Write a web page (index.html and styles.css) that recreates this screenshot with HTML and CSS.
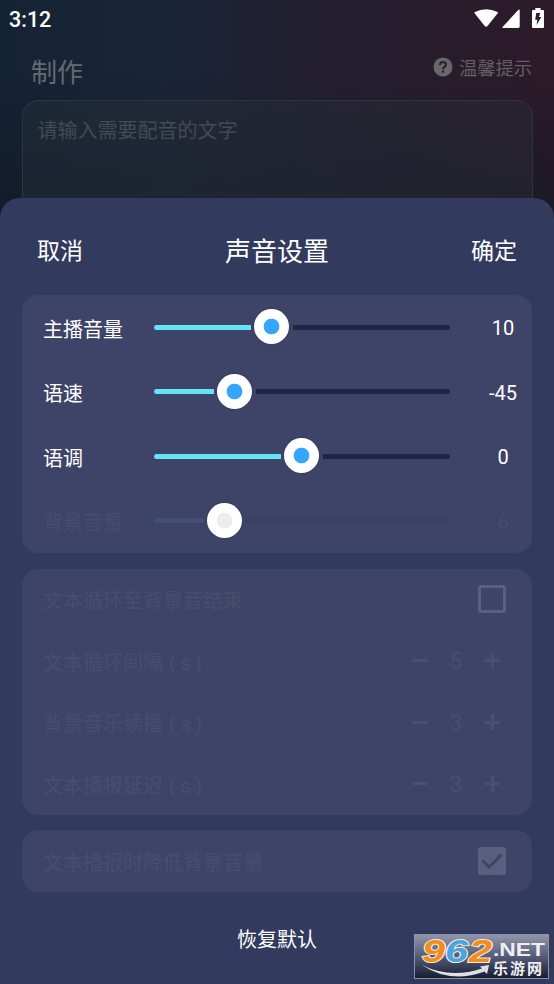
FILE: index.html
```html
<!DOCTYPE html>
<html lang="zh-CN">
<head>
<meta charset="utf-8">
<title>声音设置</title>
<link rel="stylesheet" href="styles.css">
</head>
<body>
<div class="screen">
  <div class="backdrop">
    <div class="status">
      <span class="clock">3:12</span>
      <svg class="status-icons" width="72" height="22" viewBox="0 0 72 22">
        <path fill="#fff" d="M.8 4.900Q12.300-.5 23.500 4.900Q24.200 5.500 23.500 6.500L13.500 19Q12.100 20.500 10.700 19L.8 6.500Q.1 5.500.8 4.900Z"/>
        <path fill="#fff" d="M45.700 3.500V19.600Q45.700 21 44.400 21H29.600Q27.500 21 29 19.400L44 3.300Q45.700 1.700 45.700 3.500Z"/>
        <path fill="#fff" d="M61.300 1H66.600V3H69Q70 3 70 4V20Q70 21 69 21H59Q58 21 58 20V4Q58 3 59 3H61.300Z"/>
        <path fill="#2c1b29" d="M62.300 6.100H66.200L65 10H67.300L62.600 18.100L63.300 12.700H61.200Z"/>
      </svg>
    </div>
    <div class="page-head">
      <h1 class="page-title">制作</h1>
      <div class="tips">
        <svg width="20" height="20" viewBox="0 0 20 20">
          <circle cx="10" cy="10" r="9.500" fill="#6a676b"/>
          <path d="M7 8Q7 4.900 10 4.900T13 7.700C13 9.600 10 9.800 10 12.300" fill="none" stroke="#241d2c" stroke-width="2"/>
          <rect x="9" y="13.600" width="2" height="2" fill="#241d2c"/>
        </svg>
        <span>温馨提示</span>
      </div>
    </div>
    <div class="editor">请输入需要配音的文字</div>
  </div>

  <div class="sheet">
    <div class="sheet-head">
      <span class="action">取消</span>
      <h2 class="sheet-title">声音设置</h2>
      <span class="action">确定</span>
    </div>

    <div class="card sliders">
      <div class="slider-row">
        <span class="label">主播音量</span>
        <div class="slider"><i class="fill" style="width:97px"></i><i class="thumb"></i><i class="rest"></i></div>
        <span class="value">10</span>
      </div>
      <div class="slider-row">
        <span class="label">语速</span>
        <div class="slider"><i class="fill" style="width:60px"></i><i class="thumb"></i><i class="rest"></i></div>
        <span class="value">-45</span>
      </div>
      <div class="slider-row">
        <span class="label">语调</span>
        <div class="slider"><i class="fill" style="width:127px"></i><i class="thumb"></i><i class="rest"></i></div>
        <span class="value">0</span>
      </div>
      <div class="slider-row off">
        <span class="label">背景音量</span>
        <div class="slider"><i class="fill" style="width:50px"></i><i class="thumb"></i><i class="rest"></i></div>
        <span class="value">6</span>
      </div>
    </div>

    <div class="card options">
      <div class="option-row"><span>文本循环至背景音结束</span><i class="checkbox"></i></div>
      <div class="option-row"><span>文本循环间隔<span class="unit">( s )</span></span>
        <div class="stepper"><i class="minus"></i><span class="count">5</span><i class="plus"></i></div></div>
      <div class="option-row"><span>背景音乐续播<span class="unit">( s )</span></span>
        <div class="stepper"><i class="minus"></i><span class="count">3</span><i class="plus"></i></div></div>
      <div class="option-row"><span>文本播报延迟<span class="unit">( s )</span></span>
        <div class="stepper"><i class="minus"></i><span class="count">3</span><i class="plus"></i></div></div>
    </div>

    <div class="card options">
      <div class="option-row"><span>文本播报时降低背景音量</span>
        <svg class="checked" width="28" height="28" viewBox="0 0 28 28">
          <rect width="28" height="28" rx="2.500" fill="#5a5f7d"/>
          <path d="M4.500 13.500L11.200 20L23.500 7.500" fill="none" stroke="#3d4468" stroke-width="3"/>
        </svg>
      </div>
    </div>

    <div class="reset">恢复默认</div>
  </div>

  <svg class="watermark" width="135" height="45" viewBox="0 0 135 45">
    <defs>
      <linearGradient id="plate" x1="0" y1="0" x2="0" y2="1">
        <stop offset="0" stop-color="#9397ab"/>
        <stop offset=".5" stop-color="#555c78"/>
        <stop offset="1" stop-color="#171b30"/>
      </linearGradient>
    </defs>
    <rect x=".5" y=".5" width="134" height="44" fill="url(#plate)" stroke="#8c91a8"/>
    <g class="mark-number">
      <text x="8" y="27.500" textLength="23" lengthAdjust="spacingAndGlyphs" fill="#f28c1c">9</text>
      <text x="31" y="27.500" textLength="23" lengthAdjust="spacingAndGlyphs" fill="#4aa5df">6</text>
      <text x="55" y="27.500" textLength="23" lengthAdjust="spacingAndGlyphs" fill="#f28c1c">2</text>
    </g>
    <path d="M8 31Q36 45 68 34.500L66 32.500L75 31L73 40L70.500 37.500Q36 50 8 31Z" fill="#dfe1e8"/>
    <text class="mark-net" x="79" y="21.500" textLength="52" lengthAdjust="spacingAndGlyphs">.NET</text>
    <text class="mark-name" x="79" y="39.500" textLength="49">乐游网</text>
  </svg>
</div>
</body>
</html>
```
FILE: styles.css
```css
* { box-sizing: border-box; }

body {
  margin: 0;
  font-family: Roboto, "Noto Sans CJK SC", sans-serif;
  color: #fff;
}

h1, h2 { margin: 0; font-weight: 400; }
i { display: block; flex: none; }

.screen {
  position: relative;
  width: 554px;
  height: 984px;
  overflow: hidden;
  background:
    linear-gradient(180deg, rgba(20, 24, 38, 0) 70px, rgba(20, 24, 38, .8) 240px),
    linear-gradient(90deg, #142334 0, #1a2438 30%, #221f30 55%, #2d1a28 100%);
}

.backdrop {
  height: 198px;
  display: flex;
  flex-direction: column;
  overflow: hidden;
}

.status {
  flex: none;
  height: 40px;
  padding: 7px 8px 0 9px;
  display: flex;
  justify-content: space-between;
}

.clock { font-size: 21.500px; line-height: 25px; font-weight: 500; }
.status-icons { display: block; }

.page-head {
  flex: none;
  height: 60px;
  padding: 0 22px 0 31px;
  display: flex;
  justify-content: space-between;
}

.page-title { font-size: 26px; line-height: 66px; color: #68696e; }

.tips {
  display: flex;
  align-items: center;
  gap: 6px;
  height: 54px;
  font-size: 18.300px;
  color: #625f65;
}

.editor {
  flex: none;
  height: 140px;
  margin: 0 21.500px;
  padding: 15px 15px;
  border: 1px solid #30333f;
  border-radius: 16px;
  background: rgba(45, 55, 62, .3);
  font-size: 20px;
  line-height: 30px;
  color: #454a52;
}

.sheet {
  height: 786px;
  padding: 0 22px;
  border-radius: 20px 20px 0 0;
  background: #323a5e;
}

.sheet-head {
  height: 97px;
  padding: 10px 15px 0;
  display: flex;
  align-items: center;
  justify-content: space-between;
  line-height: 38px;
}

.action { font-size: 23px; }
.sheet-title { font-size: 26px; }

.card {
  margin-bottom: 15.500px;
  border-radius: 16px;
  background: #3d4468;
}

.slider-row {
  height: 64.500px;
  padding-left: 21px;
  display: flex;
  align-items: center;
  font-size: 20px;
}

.label { flex: none; width: 111px; padding-top: 1.500px; }
.slider { flex: none; width: 296px; height: 35px; display: flex; align-items: center; }
.fill { height: 5px; border-radius: 2.500px 0 0 2.500px; background: #65e2f5; }
.rest { height: 5px; flex: 1; border-radius: 0 2.500px 2.500px 0; background: #1f2643; }

.thumb {
  width: 35px;
  height: 35px;
  margin: 0 4px 1px 3px;
  border-radius: 50%;
  background: radial-gradient(circle, #35a5fd 7.500px, #fff 8.200px);
  box-shadow: 0 0 2px rgba(20, 25, 50, .35);
}

.value { flex: none; width: 58px; margin-left: 24px; padding-top: 2px; text-align: center; }

.off .label, .off .value { color: #464d6b; }
.off .fill { background: #41506f; }
.off .rest { background: #3a4164; }
.off .thumb { background: radial-gradient(circle, #ececec 7.500px, #fff 8.200px); }

.option-row {
  height: 61.500px;
  padding: 0 26px 0 21px;
  display: flex;
  align-items: center;
  justify-content: space-between;
  font-size: 20px;
  color: #474e6b;
}

.option-row > span { padding-top: 1px; }
.unit { margin-left: 6px; letter-spacing: -.2px; }
.checkbox { width: 28px; height: 28px; border: 3px solid #5a5f7d; border-radius: 3px; }
.checked { display: block; }

.stepper { display: flex; align-items: center; margin-right: 6px; }
.count { width: 56px; padding-top: 2px; text-align: center; font-size: 23px; }

.minus, .plus { width: 16px; height: 16px; }
.minus { background: linear-gradient(#4a506c, #4a506c) center / 16px 3px no-repeat; }
.plus {
  background:
    linear-gradient(#4a506c, #4a506c) center / 16px 3px no-repeat,
    linear-gradient(#4a506c, #4a506c) center / 3px 16px no-repeat;
}

.reset { margin-top: 32px; font-size: 20px; line-height: 32px; text-align: center; }

.watermark { position: absolute; left: 414px; top: 934px; }
.mark-number {
  font: italic 700 32px "Liberation Sans", sans-serif;
  stroke: #f4ede3;
  stroke-width: 2px;
  paint-order: stroke;
}
.mark-net { font: 700 18px "Liberation Sans", sans-serif; fill: #eeeff3; }
.mark-name { font: 700 15px "Noto Sans CJK SC", sans-serif; fill: #eeeff3; }
```
